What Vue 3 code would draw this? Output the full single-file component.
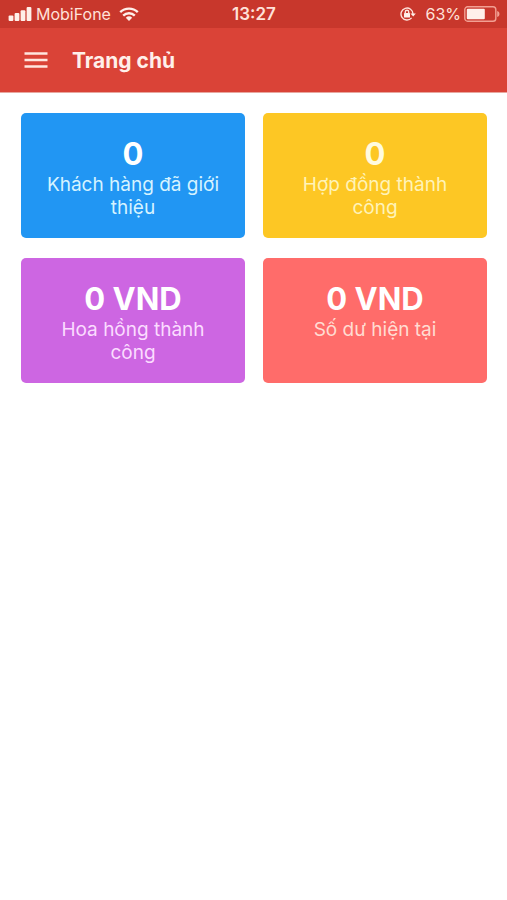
<script setup>
const cards = [
  { value: '0', label: 'Khách hàng đã giới thiệu', tone: 'blue' },
  { value: '0', label: 'Hợp đồng thành công', tone: 'yellow' },
  { value: '0 VND', label: 'Hoa hồng thành công', tone: 'purple' },
  { value: '0 VND', label: 'Số dư hiện tại', tone: 'coral' },
]
</script>

<template>
  <div class="screen">
    <div class="status">
      <div class="side">
        <svg class="signal" width="24" height="14" viewBox="0 0 24 14" aria-hidden="true">
          <rect x=".6" y="8.6" width="4.8" height="5.4" rx="1" />
          <rect x="6.6" y="6" width="4.8" height="8" rx="1" />
          <rect x="12.6" y="3.2" width="4.8" height="10.8" rx="1" />
          <rect x="18.6" y="0" width="4.8" height="14" rx="1" />
        </svg>
        <span class="carrier">MobiFone</span>
        <svg class="wifi" width="20" height="14" viewBox="0 0 20 14" aria-hidden="true">
          <path d="M1.2 5.2a12.6 12.6 0 0 1 17.6 0M4.2 8.6a8.4 8.4 0 0 1 11.6 0" />
          <path class="dot" d="M6.8 10.8a4.8 4.8 0 0 1 6.4 0L10 14z" />
        </svg>
      </div>
      <time class="clock">13:27</time>
      <div class="side end">
        <svg class="lock" width="16" height="14" viewBox="0 0 16 14" aria-hidden="true">
          <path class="line" d="M11.6 10.9A6 6 0 1 1 13 7" />
          <path d="M10.4 6.4h5.4L13.2 9.6z" />
          <rect x="4" y="6" width="6" height="4.4" rx=".5" />
          <path class="line" d="M5.3 6.4V4.9a1.7 1.7 0 0 1 3.4 0v1.5" />
        </svg>
        <span class="percent">63%</span>
        <svg class="battery" width="36" height="16" viewBox="0 0 36 16" aria-hidden="true">
          <rect class="shell" x=".8" y=".8" width="31" height="14.4" rx="2.8" />
          <rect x="2.8" y="2.8" width="18" height="10.4" rx="1" />
          <path class="cap" d="M33.2 5c3 .6 3 5.4 0 6z" />
        </svg>
      </div>
    </div>

    <header class="bar">
      <button class="menu" type="button" aria-label="Menu">
        <svg width="24" height="18" viewBox="0 0 24 18" aria-hidden="true">
          <path d="M0.5 2.5h23M0.5 9h23M0.5 15.5h23" />
        </svg>
      </button>
      <h1>Trang chủ</h1>
    </header>

    <main class="grid">
      <section v-for="card in cards" :key="card.label" class="card" :class="card.tone">
        <strong>{{ card.value }}</strong>
        <p>{{ card.label }}</p>
      </section>
    </main>
  </div>
</template>

<style>
body {
  margin: 0;
  background: #fff;
}
</style>

<style scoped>
.screen {
  min-height: 100vh;
  background: #fff;
  font-family: Inter, "Noto Sans", sans-serif;
  color: #fff;
}
.status {
  display: grid;
  grid-template-columns: 1fr auto 1fr;
  align-items: center;
  height: 28px;
  padding: 0 7px 0 8px;
  background: #c8372c;
  color: #ffe2da;
  font-size: 16px;
  line-height: 28px;
}
.status svg {
  fill: #fff0ea;
}
.side {
  display: flex;
  align-items: center;
}
.end {
  justify-content: flex-end;
}
.carrier {
  margin: 0 8px 0 4px;
}
.wifi path {
  fill: none;
  stroke: #fff0ea;
  stroke-width: 2.4;
}
.wifi .dot {
  fill: #fff0ea;
  stroke: none;
}
.clock {
  font-size: 17px;
  font-weight: 600;
}
.percent {
  margin: 0 3px 0 9px;
}
.status .line {
  fill: none;
  stroke: #ffe2da;
  stroke-width: 1.4;
}
.status .shell {
  fill: none;
  stroke: #f2a093;
  stroke-width: 1.4;
}
.status .cap {
  fill: #f2a093;
}
.bar {
  display: flex;
  align-items: center;
  gap: 24px;
  height: 64px;
  padding: 0 24px;
  background: #da4337;
  border-bottom: 1px solid #e8a79f;
}
.menu {
  display: flex;
  padding: 0;
  border: 0;
  background: none;
}
.menu path {
  stroke: #ffe6df;
  stroke-width: 2.4;
}
h1 {
  margin: 0;
  color: #fff0ea;
  font-size: 21px;
  font-weight: 700;
  line-height: 29px;
}
.grid {
  display: grid;
  grid-template-columns: 1fr 1fr;
  grid-auto-rows: 1fr;
  gap: 20px 18px;
  padding: 20px 20px 20px 21px;
}
.card {
  box-sizing: border-box;
  min-height: 125px;
  padding: 21px 24px 18px;
  border-radius: 5px;
  text-align: center;
}
.card strong {
  display: block;
  font-size: 31px;
  font-weight: 700;
  line-height: 39px;
}
.card p {
  margin: 0;
  font-size: 19px;
  line-height: 23px;
}
.blue {
  background: #2196f3;
}
.blue p {
  color: #d5f3ff;
}
.yellow {
  background: #fdc724;
}
.yellow strong {
  color: #fffbe0;
}
.yellow p {
  color: #fff3b8;
}
.purple {
  background: #cd66e2;
}
.purple p {
  color: #fbdcff;
}
.coral {
  background: #ff6c6a;
}
.coral p {
  color: #ffdcd2;
}
</style>
